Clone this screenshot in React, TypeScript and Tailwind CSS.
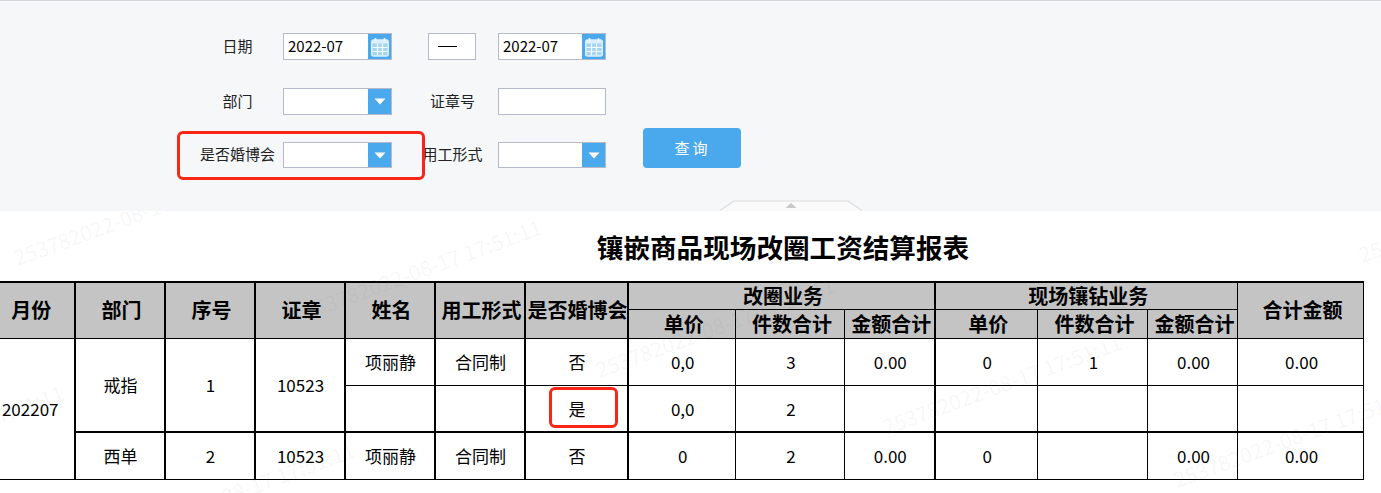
import React from "react";

const FONT = "font-['Noto_Sans_CJK_SC','Noto_Sans',sans-serif]";

function Calendar() {
  return (
    <svg width="18" height="20" viewBox="0 0 18 20" fill="none">
      <rect x="0.75" y="3" width="16.5" height="16" rx="2" fill="#a6d4f5" stroke="#dceffc" strokeWidth="1.5" />
      <rect x="1" y="3" width="16" height="3.5" fill="#dceffc" />
      <rect x="3.5" y="1" width="2" height="3.5" rx="1" fill="#eef7fe" />
      <rect x="12.5" y="1" width="2" height="3.5" rx="1" fill="#eef7fe" />
      <g stroke="#f4faff" strokeWidth="1.2">
        <path d="M6.5 6.5V18.5M11.5 6.5V18.5" />
        <path d="M1.5 10.5H16.5M1.5 14.5H16.5" />
      </g>
    </svg>
  );
}

function Field({ value, icon }: { value?: string; icon?: "cal" | "down" }) {
  return (
    <div className="flex h-full w-full border border-[#b7bacb] bg-white">
      <div className="flex-1 pl-[4px] text-[15px] leading-[24px] text-black">{value}</div>
      {icon && (
        <div className="flex w-[23px] items-center justify-center bg-[#4aa9ec]">
          {icon === "cal" ? (
            <Calendar />
          ) : (
            <svg width="12" height="7" viewBox="0 0 12 7">
              <path d="M0.5 0.5H11.5L6 6.5Z" fill="#ffffff" />
            </svg>
          )}
        </div>
      )}
    </div>
  );
}

function Label({ children, col }: { children: React.ReactNode; col: 1 | 3 }) {
  return (
    <div
      className={
        col === 1
          ? "self-center pb-[3px] pr-[8px] text-center text-[15px] leading-none text-[#222]"
          : "self-center pb-[3px] pr-[9px] text-center text-[15px] leading-none text-[#222]"
      }
    >
      {children}
    </div>
  );
}

const H = "border border-black bg-[#c4c4c4] p-0 pl-[4px] text-center align-middle text-[20px] font-bold leading-none whitespace-nowrap";
const H2 = "border border-r-2 border-black bg-[#c4c4c4] p-0 pl-[4px] text-center align-middle text-[20px] font-bold leading-none whitespace-nowrap";
const HW = "border border-r-2 border-black bg-[#c4c4c4] p-0 pl-[2px] text-center align-middle text-[20px] font-bold leading-none whitespace-nowrap";
const C = "border border-black p-0 pl-[2px] text-center align-middle text-[17px] font-normal leading-none whitespace-nowrap";
const C2 = "border border-r-2 border-black p-0 pl-[2px] text-center align-middle text-[17px] font-normal leading-none whitespace-nowrap";
const CB = "border border-b-2 border-black p-0 pl-[2px] text-center align-middle text-[17px] font-normal leading-none whitespace-nowrap";
const C2B = "border border-r-2 border-b-2 border-black p-0 pl-[2px] text-center align-middle text-[17px] font-normal leading-none whitespace-nowrap";

const marks: [number, number][] = [
  [18, 268],
  [307, 322],
  [600, 380],
  [887, 437],
  [1178, 490],
  [1363, 265],
  [120, 545],
  [-171, 488],
];

export default function App() {
  return (
    <div className={`relative h-[493px] w-[1381px] overflow-hidden bg-white text-black ${FONT}`}>
      <div className="relative h-[211px] border-t border-[#d5d6da] bg-[#f6f7f9] pl-[200px] pt-[32px]">
        <div className="grid grid-cols-[83px_133px_82px_108px_135px] grid-rows-[28px_27px_26px] gap-y-[27px]">
          <Label col={1}>日期</Label>
          <div className="h-[27px] w-[109px]"><Field value="2022-07" icon="cal" /></div>
          <div className="pr-[22px] pl-[12px]">
            <div className="flex h-[27px] items-center border border-[#b7bacb] bg-white pl-[9px]">
              <div className="h-[1.5px] w-[19px] bg-black" />
            </div>
          </div>
          <div className="h-[27px] w-[108px]"><Field value="2022-07" icon="cal" /></div>
          <div />

          <Label col={1}>部门</Label>
          <div className="h-[27px] w-[109px]"><Field icon="down" /></div>
          <Label col={3}>证章号</Label>
          <div className="h-[27px] w-[108px]"><Field /></div>
          <div />

          <Label col={1}>是否婚博会</Label>
          <div className="h-[26px] w-[109px]"><Field icon="down" /></div>
          <Label col={3}>用工形式</Label>
          <div className="h-[26px] w-[108px]"><Field icon="down" /></div>
          <button className="ml-[37px] h-[40px] w-[98px] self-end rounded-[4px] bg-[#4aa9ec] pb-[2px] pl-[1px] text-[15px] leading-none tracking-[3px] text-white">
            查询
          </button>
        </div>
        <svg className="absolute bottom-0 left-[719px]" width="144" height="11" viewBox="0 0 144 11" fill="none">
          <path d="M1 10.5L15 1H129L143 10.5" fill="#fafafa" stroke="#dcdcdc" strokeWidth="1.2" />
          <path d="M66.5 8L72 3L77.5 8Z" fill="#c8c8c8" />
        </svg>
      </div>

      <div className="pl-[185px] pt-[17px] text-center text-[26.6px] font-bold leading-[38px]">
        镶嵌商品现场改圈工资结算报表
      </div>

      <table className="ml-[-16px] mt-[15px] w-[1379px] table-fixed border-collapse border-t-2 border-black">
        <colgroup>
          <col className="w-[90px]" />
          <col className="w-[90px]" />
          <col className="w-[90px]" />
          <col className="w-[90px]" />
          <col className="w-[90px]" />
          <col className="w-[90px]" />
          <col className="w-[103px]" />
          <col className="w-[108px]" />
          <col className="w-[109px]" />
          <col className="w-[90px]" />
          <col className="w-[103px]" />
          <col className="w-[110px]" />
          <col className="w-[90px]" />
          <col className="w-[126px]" />
        </colgroup>
        <thead>
          <tr className="h-[27px]">
            <th rowSpan={2} className={H2}>月份</th>
            <th rowSpan={2} className={H2}>部门</th>
            <th rowSpan={2} className={H2}>序号</th>
            <th rowSpan={2} className={H2}>证章</th>
            <th rowSpan={2} className={H2}>姓名</th>
            <th rowSpan={2} className={H2}>用工形式</th>
            <th rowSpan={2} className={HW}>是否婚博会</th>
            <th colSpan={3} className={H2}>改圈业务</th>
            <th colSpan={3} className={H}>现场镶钻业务</th>
            <th rowSpan={2} className={H}>合计金额</th>
          </tr>
          <tr className="h-[29px]">
            <th className={H}>单价</th>
            <th className={H}>件数合计</th>
            <th className={H2}>金额合计</th>
            <th className={H}>单价</th>
            <th className={H}>件数合计</th>
            <th className={H}>金额合计</th>
          </tr>
        </thead>
        <tbody>
          <tr className="h-[47px]">
            <td rowSpan={3} className={C2}>202207</td>
            <td rowSpan={2} className={C2B}>戒指</td>
            <td rowSpan={2} className={C2B}>1</td>
            <td rowSpan={2} className={C2B}>10523</td>
            <td className={C2}>项丽静</td>
            <td className={C2}>合同制</td>
            <td className={C2}>否</td>
            <td className={C}>0,0</td>
            <td className={C}>3</td>
            <td className={C2}>0.00</td>
            <td className={C}>0</td>
            <td className={C}>1</td>
            <td className={C}>0.00</td>
            <td className={C}>0.00</td>
          </tr>
          <tr className="h-[47px]">
            <td className={C2B}></td>
            <td className={C2B}></td>
            <td className={C2B}>是</td>
            <td className={CB}>0,0</td>
            <td className={CB}>2</td>
            <td className={C2B}></td>
            <td className={CB}></td>
            <td className={CB}></td>
            <td className={CB}></td>
            <td className={CB}></td>
          </tr>
          <tr className="h-[47px]">
            <td className={C2}>西单</td>
            <td className={C2}>2</td>
            <td className={C2}>10523</td>
            <td className={C2}>项丽静</td>
            <td className={C2}>合同制</td>
            <td className={C2}>否</td>
            <td className={C}>0</td>
            <td className={C}>2</td>
            <td className={C2}>0.00</td>
            <td className={C}>0</td>
            <td className={C}></td>
            <td className={C}>0.00</td>
            <td className={C}>0.00</td>
          </tr>
        </tbody>
      </table>

      <div className="pointer-events-none absolute inset-x-0 bottom-0 top-[211px] overflow-hidden">
        {marks.map(([x, y], i) => (
          <div
            key={i}
            className="absolute origin-bottom-left whitespace-nowrap text-[21px] leading-none text-[#808080]/[0.07]"
            style={{ left: x, top: y - 211 - 21, transform: "rotate(-20deg)" }}
          >
            253782022-08-17 17:51:11
          </div>
        ))}
      </div>

      <div className="pointer-events-none absolute left-[177px] top-[131px] h-[49px] w-[248px] rounded-[6px] border-[3px] border-[#fb2516]" />
      <div className="pointer-events-none absolute left-[549px] top-[387px] h-[41px] w-[69px] rounded-[6px] border-[3px] border-[#fb2516]" />
    </div>
  );
}
